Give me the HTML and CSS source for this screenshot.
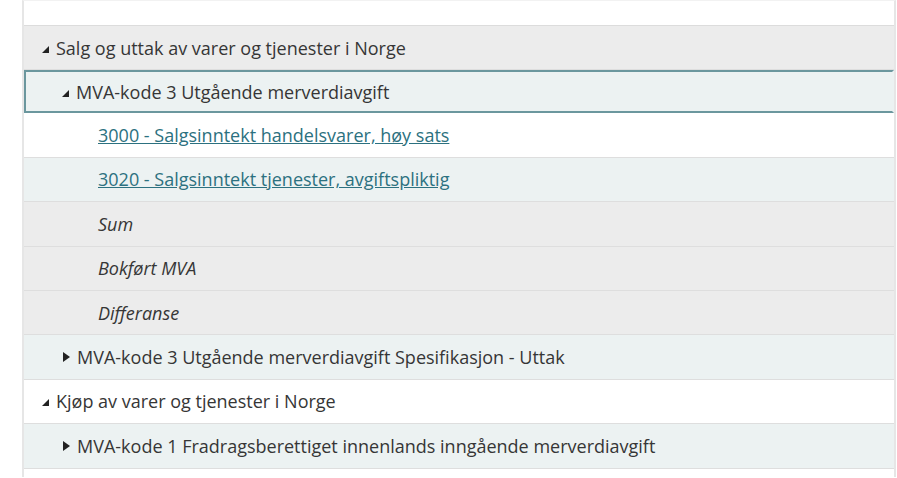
FILE: index.html
```html
<!DOCTYPE html>
<html lang="no">
<head>
    <meta charset="UTF-8">
    <title>MVA-avstemming</title>
    <link rel="stylesheet" href="styles.css">
</head>
<body>
    <div class="tree">
        <div class="row top"></div>
        <div class="row gray lvl1"><span class="tog open"></span>Salg og uttak av varer og tjenester i Norge</div>
        <div class="row teal lvl2 selected"><span class="tog open"></span>MVA-kode 3 Utgående merverdiavgift</div>
        <div class="row white lvl3"><a href="#">3000 - Salgsinntekt handelsvarer, høy sats</a></div>
        <div class="row teal lvl3"><a href="#">3020 - Salgsinntekt tjenester, avgiftspliktig</a></div>
        <div class="row gray lvl3 sum">Sum</div>
        <div class="row gray lvl3 sum">Bokført MVA</div>
        <div class="row gray lvl3 sum">Differanse</div>
        <div class="row teal lvl2"><span class="tog closed"></span>MVA-kode 3 Utgående merverdiavgift Spesifikasjon - Uttak</div>
        <div class="row white lvl1"><span class="tog open"></span>Kjøp av varer og tjenester i Norge</div>
        <div class="row teal lvl2"><span class="tog closed"></span>MVA-kode 1 Fradragsberettiget innenlands inngående merverdiavgift</div>
        <div class="row white tail"></div>
    </div>
</body>
</html>
```

FILE: styles.css
```css
body {
    margin: 0;
    padding: 0;
    background: #fff;
    font-family: "Open Sans", "DejaVu Sans", sans-serif;
    font-size: 18px;
    color: #363636;
}
.tree {
    margin: 0 1px 0 22px;
    border-left: 2px solid #e6e6e6;
    border-right: 2px solid #e6e6e6;
    border-top: 1px solid #f2f2f2;
}
.row {
    box-sizing: border-box;
    height: 44.4px;
    display: flex;
    align-items: center;
    border-bottom: 1px solid #dedede;
    white-space: nowrap;
}
.row.top {
    height: 25px;
    border-bottom: 1px solid #dcdcdc;
}
.row.tail {
    height: 8px;
    border-bottom: none;
}
.gray { background: #ececec; }
.teal { background: #ecf2f2; }
.white { background: #fff; }
.selected {
    height: 43px;
    border: 2px solid #6b979e;
    border-right-color: #ecf2f2;
}
.lvl1 { padding-left: 18px; }
.lvl2 { padding-left: 38px; }
.lvl3 { padding-left: 74px; }
.selected.lvl2 { padding-left: 36px; }
.sum { font-style: italic; }
a {
    color: #2c7180;
    text-decoration: underline;
}
.tog {
    display: inline-block;
    width: 0;
    height: 0;
    margin-right: 7px;
}
.tog.open {
    border-left: 7px solid transparent;
    border-bottom: 7px solid #222;
    margin-top: 3px;
}
.tog.closed {
    border-top: 5px solid transparent;
    border-bottom: 5px solid transparent;
    border-left: 7px solid #222;
    margin-left: 1px;
}
```
